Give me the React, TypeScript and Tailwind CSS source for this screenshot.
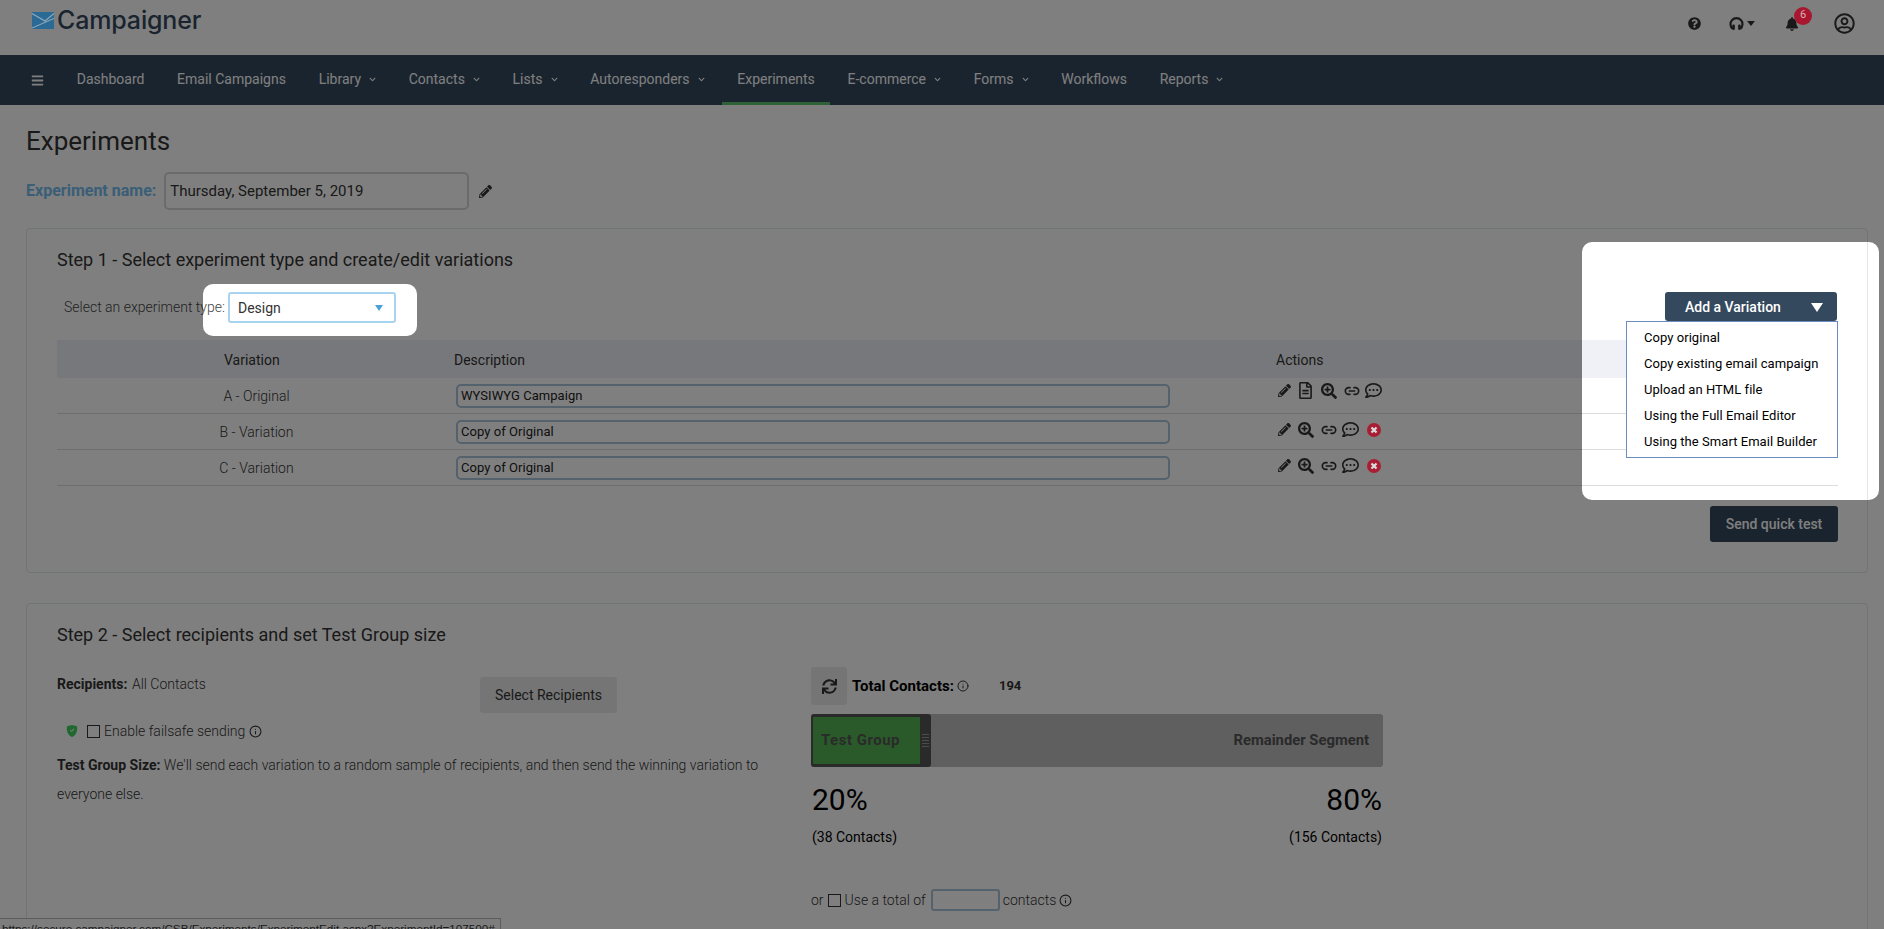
import React from "react";
import { FaBars, FaBell, FaChevronDown, FaPencilAlt, FaQuestionCircle, FaRegCommentDots, FaRegFileAlt, FaRegUserCircle, FaSearchPlus, FaSync } from "react-icons/fa";
import { BsShieldFillCheck } from "react-icons/bs";
import { Info, Link2 } from "lucide-react";

const nav = [
  { t: "Dashboard" }, { t: "Email Campaigns" }, { t: "Library", c: 1 }, { t: "Contacts", c: 1 }, { t: "Lists", c: 1 },
  { t: "Autoresponders", c: 1 }, { t: "Experiments", a: 1 }, { t: "E-commerce", c: 1 }, { t: "Forms", c: 1 }, { t: "Workflows" }, { t: "Reports", c: 1 },
];

const rows = [
  { v: "A - Original", d: "WYSIWYG Campaign", doc: true, del: false },
  { v: "B - Variation", d: "Copy of Original", doc: false, del: true },
  { v: "C - Variation", d: "Copy of Original", doc: false, del: true },
];

const menu = ["Copy original", "Copy existing email campaign", "Upload an HTML file", "Using the Full Email Editor", "Using the Smart Email Builder"];

function Logo() {
  return (
    <div className="flex items-center gap-[3px]">
      <svg width="22" height="17" viewBox="0 0 22 17" className="relative z-30 mt-[1px]">
        <rect width="22" height="17" fill="#2b6a94" />
        <path d="M0 1.5 L13 9 L22 1.5 M0 16 L22 6.5" fill="none" stroke="#8fa9bb" strokeWidth="1.1" />
      </svg>
      <span className="font-['Inter',sans-serif] font-medium text-[25px] leading-[30px] tracking-[-0.15px] text-[#34495e]">Campaigner</span>
    </div>
  );
}

function DeleteIcon() {
  return (
    <svg width="14" height="14" viewBox="0 0 14 14" className="relative z-30 ml-[8px]">
      <circle cx="7" cy="7" r="7" fill="#a81f33" />
      <path d="M4.5 4.5 L9.5 9.5 M9.5 4.5 L4.5 9.5" stroke="#dddddd" strokeWidth="2.2" />
    </svg>
  );
}

export default function App() {
  return (
    <div className="relative h-[929px] w-full overflow-hidden bg-white font-['Roboto',sans-serif] text-[14px] text-[#333333]">
      <header className="flex h-[55px] items-start justify-between pl-[32px] pr-[29px] pt-[5px]">
        <Logo />
        <div className="mt-[8px] flex items-center text-[#333333]">
          <FaQuestionCircle className="text-[13px]" />
          <div className="ml-[28px] flex items-center gap-[3px]">
            <svg width="15" height="13" viewBox="0 0 14 12" fill="none">
              <path d="M3.5 11 A5.6 5.6 0 1 1 10.5 11" stroke="#333333" strokeWidth="2" />
              <rect x="3" y="7" width="2.5" height="5" rx="1" fill="#333333" />
              <rect x="8.5" y="7" width="2.5" height="5" rx="1" fill="#333333" />
            </svg>
            <span className="h-0 w-0 border-x-[4px] border-t-[5px] border-x-transparent border-t-[#333333]" />
          </div>
          <div className="relative ml-[30px]">
            <FaBell className="text-[14px]" />
            <span className="absolute left-[9px] top-[-10px] z-30 flex h-[18px] w-[18px] items-center justify-center rounded-full bg-[#a8172f] text-[11px] text-[#dcb0b0]">6</span>
          </div>
          <FaRegUserCircle className="ml-[35px] text-[21px]" />
        </div>
      </header>

      <nav className="flex h-[50px] items-stretch gap-[2.7px] bg-[#34495e] pl-[31px] text-white">
        <div className="mr-[15px] flex items-center"><FaBars className="text-[13px]" /></div>
        {nav.map((n) => (
          <div key={n.t} className={`flex items-center gap-[8px] px-[15px] ${n.a ? "border-b-[3px] border-[#5dc26a] pt-[1px]" : "pb-[2px]"}`}>
            <span>{n.t}</span>
            {n.c ? <FaChevronDown className="text-[7px]" /> : null}
          </div>
        ))}
      </nav>

      <main className="pl-[26px] pr-[16px]">
        <h1 className="mt-[18px] text-[26px] font-normal leading-[36px]">Experiments</h1>
        <div className="mt-[13px] flex items-center">
          <label className="text-[16px] font-bold text-[#74bcee]">Experiment name:</label>
          <div className="ml-[8px] flex h-[38px] w-[305px] items-center rounded-[5px] border-2 border-[#d6d6d6] pl-[4px] text-[15px]">Thursday, September 5, 2019</div>
          <FaPencilAlt className="ml-[10px] text-[13px]" />
        </div>

        <section className="mt-[18px] h-[345px] rounded-[4px] border border-[#dfe8e8] pl-[30px] pr-[29px] pt-[19px]">
          <h2 className="text-[18px] font-normal leading-[24px]">Step 1 - Select experiment type and create/edit variations</h2>
          <div className="mt-[20px] flex h-[31px] items-center justify-between">
            <div className="flex items-center pl-[7px]">
              <span className="font-light text-[#444444]">Select an experiment type:</span>
              <div className="ml-[3px] flex h-[31px] w-[168px] items-center justify-between rounded-[3px] border-2 border-[#a9d4f0] pl-[8px] pr-[11px] text-[14px]">
                <span className="mt-[1px]">Design</span>
                <span className="mt-[1px] h-0 w-0 border-x-[4.5px] border-t-[6px] border-x-transparent border-t-[#4ca0d8]" />
              </div>
            </div>
            <div className="relative mr-[1px] h-[29px] w-[172px] self-start">
              <div className="flex h-full items-center justify-between rounded-[3px] bg-[#34495e] pl-[20px] pr-[14px] font-medium text-white">
                <span className="mt-[1px]">Add a Variation</span>
                <span className="mt-[1px] h-0 w-0 border-x-[6px] border-t-[9px] border-x-transparent border-t-white" />
              </div>
              <div className="absolute right-[-1px] top-[29px] z-10 flex h-[137px] w-[212px] flex-col justify-center border border-[#6c8ebf] bg-white pl-[17px] text-[13px] tracking-[0.05px] text-black">
                {menu.map((m) => <div key={m} className="flex h-[26px] items-center">{m}</div>)}
              </div>
            </div>
          </div>

          <div className="mt-[17px] grid h-[38px] grid-cols-[397px_822px_1fr] items-center bg-[#eff1f6]">
            <span className="mt-[2px] pl-[167px]">Variation</span>
            <span className="mt-[2px]">Description</span>
            <span className="mt-[2px]">Actions</span>
          </div>
          {rows.map((r) => (
            <div key={r.d + r.v} className="grid h-[36px] grid-cols-[397px_822px_1fr] items-center border-b border-[#dddddd]">
              <span className="mt-[2px] pl-[2px] text-center font-light">{r.v}</span>
              <div className="ml-[2px] flex h-[24px] w-[714px] items-center rounded-[5px] border-2 border-[#a9c4dc] pl-[3px] text-[13px] font-normal tracking-[0.05px] text-[#222222]">{r.d}</div>
              <div className={`flex items-center text-[#333333] ${r.doc ? "mb-[10px]" : "mb-[4px]"}`}>
                <FaPencilAlt className="ml-[2px] text-[13px]" />
                {r.doc ? <FaRegFileAlt className="ml-[6px] text-[17px]" /> : null}
                <FaSearchPlus className="ml-[7px] text-[16px]" />
                <Link2 size={16} strokeWidth={2.5} className="ml-[7px]" />
                <FaRegCommentDots className="ml-[5px] text-[17px]" />
                {r.del ? <DeleteIcon /> : null}
              </div>
            </div>
          ))}
          <div className="mt-[20px] flex justify-end">
            <div className="flex h-[36px] w-[128px] items-center justify-center rounded-[3px] bg-[#34495e] text-[14px] font-medium text-white">Send quick test</div>
          </div>
        </section>

        <section className="mt-[30px] h-[400px] rounded-[4px] border border-[#dfe8e8] pl-[30px] pr-[29px] pt-[19px]">
          <h2 className="text-[18px] font-normal leading-[24px]">Step 2 - Select recipients and set Test Group size</h2>
          <div className="mt-[20px] flex">
            <div className="w-[754px] pt-[7px]">
              <div className="flex items-start">
                <div className="w-[423px] leading-[20px]"><b className="font-bold">Recipients:</b> <span className="ml-[1px] font-light">All Contacts</span></div>
                <div className="mt-[3px] flex h-[36px] w-[137px] items-center justify-center rounded-[3px] bg-[#ebebeb]">Select Recipients</div>
              </div>
              <div className="mt-[8px] flex h-[20px] items-center pl-[9px] font-light">
                <BsShieldFillCheck className="text-[12px] text-[#40d060]" />
                <span className="ml-[9px] h-[13px] w-[13px] border border-[#333333]" />
                <span className="ml-[4px]">Enable failsafe sending</span>
                <Info size={13} className="ml-[4px] text-[#333333]" />
              </div>
              <p className="mt-[10px] w-[720px] font-light leading-[29px]"><b className="font-bold text-[#333333]">Test Group Size:</b> We'll send each variation to a random sample of recipients, and then send the winning variation to everyone else.</p>
            </div>
            <div className="w-[572px]">
              <div className="flex items-center">
                <div className="flex h-[38px] w-[36px] items-center justify-center rounded-[3px] bg-[#ebebeb]"><FaSync className="text-[15px]" /></div>
                <span className="ml-[5px] text-[15px] font-bold text-black">Total Contacts:</span>
                <Info size={12} className="ml-[3px]" />
                <span className="ml-[30px] text-[13px] font-bold">194</span>
              </div>
              <div className="mt-[9px] flex h-[53px] items-center justify-between rounded-[3px] bg-[#bebebe]">
                <div className="flex h-[53px] w-[120px] rounded-[3px] bg-[#555555]">
                  <div className="my-[3px] ml-[2px] flex w-[107px] items-center rounded-[1px] bg-[#55b455] pl-[8px] text-[15px] font-bold tracking-[0.5px] text-[#555555]">Test Group</div>
                  <div className="flex flex-1 flex-col items-center justify-center gap-[2px]">
                    <span className="h-px w-[7px] bg-[#999999]" /><span className="h-px w-[7px] bg-[#999999]" /><span className="h-px w-[7px] bg-[#999999]" /><span className="h-px w-[7px] bg-[#999999]" /><span className="h-px w-[7px] bg-[#999999]" />
                  </div>
                </div>
                <span className="pr-[14px] text-[14.8px] font-bold text-[#555555]">Remainder Segment</span>
              </div>
              <div className="mt-[15px] flex justify-between px-[1px] text-[30px] font-normal leading-[36px] text-black"><span>20%</span><span>80%</span></div>
              <div className="mt-[9px] flex justify-between px-[1px] leading-[20px] text-black"><span>(38 Contacts)</span><span>(156 Contacts)</span></div>
              <div className="mt-[42px] flex h-[22px] items-center font-light">
                <span>or</span>
                <span className="ml-[4px] h-[13px] w-[13px] border border-[#333333]" />
                <span className="ml-[4px]">Use a total of</span>
                <span className="ml-[5px] h-[22px] w-[69px] rounded-[3px] border-2 border-[#a9c4dc]" />
                <span className="ml-[3px]">contacts</span>
                <Info size={13} className="ml-[3px] text-[#333333]" />
              </div>
            </div>
          </div>
        </section>
      </main>

      <div className="absolute bottom-0 left-0 h-[11px] w-[501px] overflow-hidden whitespace-nowrap border-r border-t border-[#bbbbbb] bg-[#fbfbfb] pl-[2px] pt-[3px] font-['Liberation_Sans',sans-serif] text-[11.7px] leading-[14px] text-[#333333]">https://secure.campaigner.com/CSB/Experiments/ExperimentEdit.aspx?ExperimentId=107500#</div>

      <div className="absolute inset-0 z-20 bg-black/50 [clip-path:path(evenodd,'M0_0H1884V929H0Z_M213_284H407a10_10_0_0_1_10_10V326a10_10_0_0_1-10_10H213a10_10_0_0_1-10-10V294a10_10_0_0_1_10-10Z_M1592_242H1869a10_10_0_0_1_10_10V490a10_10_0_0_1-10_10H1592a10_10_0_0_1-10-10V252a10_10_0_0_1_10-10Z')]" />
    </div>
  );
}
